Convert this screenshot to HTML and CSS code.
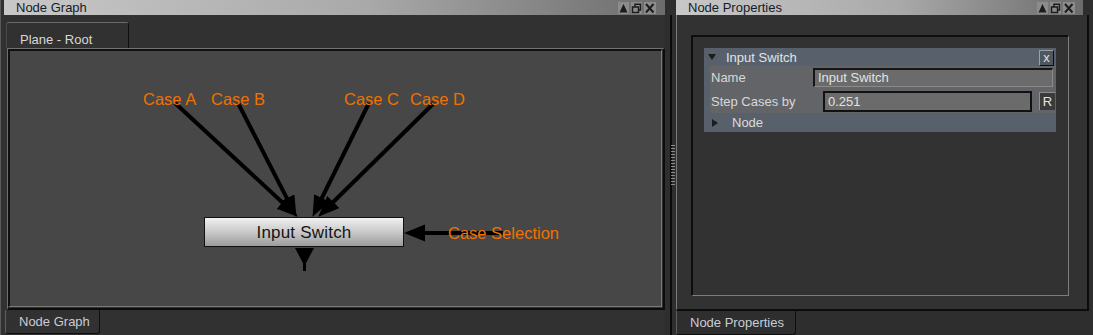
FILE: index.html
```html
<!DOCTYPE html>
<html lang="en">
<head>
    <meta charset="UTF-8">
    <title>Node Graph</title>
    <link rel="stylesheet" href="styles.css">
</head>
<body>
    <div class="app">

        <!-- Node graph pane -->
        <section class="pane pane-graph">
            <header class="titlebar">
                <span class="title">Node Graph</span>
                <svg class="tb-buttons" width="38" height="12" viewBox="0 0 38 12">
                    <rect x="0" y="0" width="11" height="12" fill="#8c8c8c"/>
                    <rect x="13" y="0" width="11" height="12" fill="#8c8c8c"/>
                    <rect x="26" y="0" width="12" height="12" fill="#8c8c8c"/>
                    <polygon points="1.5,10.5 5.5,2 9.5,10.5" fill="#1c1c1c"/>
                    <rect x="14.5" y="5" width="6" height="5.5" fill="none" stroke="#1c1c1c" stroke-width="1.5"/>
                    <path d="M17 5 V2.2 H22.5 V8 H20.5" fill="none" stroke="#1c1c1c" stroke-width="1.5"/>
                    <path d="M28 2 L35.5 10.5 M35.5 2 L28 10.5" stroke="#1c1c1c" stroke-width="2"/>
                </svg>
            </header>

            <div class="tabs-top">
                <div class="tab">Plane - Root</div>
            </div>

            <div class="graph-frame">
                <div class="canvas">
                    <svg class="wires" width="651" height="255" viewBox="10 51 651 255">
                        <defs>
                            <marker id="head" markerUnits="userSpaceOnUse" markerWidth="22" markerHeight="18"
                                    refX="10" refY="8.5" orient="auto">
                                <path d="M0,0 L21,8.5 L0,17 z" fill="#000"/>
                            </marker>
                        </defs>
                        <g stroke="#000" stroke-width="4" marker-end="url(#head)">
                            <line x1="175" y1="103" x2="289.7" y2="209.2"/>
                            <line x1="238" y1="103" x2="291.4" y2="207.1"/>
                            <line x1="369" y1="103" x2="317.4" y2="207.0"/>
                            <line x1="434" y1="103" x2="326.1" y2="209.0"/>
                            <line x1="503" y1="233" x2="415" y2="233"/>
                        </g>
                        <polygon points="295,248 314,248 304.5,266" fill="#000"/>
                        <line x1="304.5" y1="248" x2="304.5" y2="271" stroke="#000" stroke-width="3"/>
                    </svg>

                    <span class="case" style="left: 133px; top: 40px;">Case A</span>
                    <span class="case" style="left: 201px; top: 40px;">Case B</span>
                    <span class="case" style="left: 334px; top: 40px;">Case C</span>
                    <span class="case" style="left: 400px; top: 40px;">Case D</span>
                    <span class="case" style="left: 438px; top: 174px;">Case Selection</span>

                    <div class="node" style="left: 194px; top: 166px;">Input Switch</div>
                </div>
            </div>

            <div class="tabs-bottom">
                <div class="btab">Node Graph</div>
            </div>
        </section>

        <!-- Splitter -->
        <div class="splitter">
            <div class="grip"></div>
        </div>

        <!-- Node properties pane -->
        <section class="pane pane-props">
            <header class="titlebar">
                <span class="title">Node Properties</span>
                <svg class="tb-buttons" width="38" height="12" viewBox="0 0 38 12">
                    <rect x="0" y="0" width="11" height="12" fill="#8c8c8c"/>
                    <rect x="13" y="0" width="11" height="12" fill="#8c8c8c"/>
                    <rect x="26" y="0" width="12" height="12" fill="#8c8c8c"/>
                    <polygon points="1.5,10.5 5.5,2 9.5,10.5" fill="#1c1c1c"/>
                    <rect x="14.5" y="5" width="6" height="5.5" fill="none" stroke="#1c1c1c" stroke-width="1.5"/>
                    <path d="M17 5 V2.2 H22.5 V8 H20.5" fill="none" stroke="#1c1c1c" stroke-width="1.5"/>
                    <path d="M28 2 L35.5 10.5 M35.5 2 L28 10.5" stroke="#1c1c1c" stroke-width="2"/>
                </svg>
            </header>

            <div class="props-body">
                <div class="props-box">
                    <div class="group">
                        <div class="group-head">
                            <span class="arrow-down"></span>
                            <span class="group-title">Input Switch</span>
                            <span class="close-btn">x</span>
                        </div>
                        <div class="rows">
                            <div class="row row-name">
                                <span class="label">Name</span>
                                <span class="field field-name">Input Switch</span>
                            </div>
                            <div class="row row-step">
                                <span class="label">Step Cases by</span>
                                <span class="field field-step">0.251</span>
                                <span class="reset-btn">R</span>
                            </div>
                        </div>
                        <div class="group-sub">
                            <span class="arrow-right"></span>
                            <span>Node</span>
                        </div>
                    </div>
                </div>
            </div>

            <div class="tabs-bottom">
                <div class="btab">Node Properties</div>
            </div>
        </section>
    </div>
</body>
</html>
```

FILE: styles.css
```css
* { box-sizing: border-box; }

body {
    margin: 0;
    background-color: #2e2e2e;
    font-family: "Liberation Sans", Arial, sans-serif;
    font-size: 13px;
    color: #d4d4d4;
    overflow: hidden;
}

.app {
    display: flex;
    width: 1093px;
    height: 335px;
}

.pane {
    display: flex;
    flex-direction: column;
    background-color: #313131;
}

/* Title bars */
.titlebar {
    height: 15px;
    display: flex;
    align-items: center;
    justify-content: space-between;
    padding: 0 9px 0 12px;
    background: linear-gradient(to right, #c8c8c8, #a9a9a9 55%, #6c6c6c);
    color: #151b28;
    line-height: 15px;
}

.tb-buttons {
    display: block;
    margin-top: 1px;
}

/* Left pane */
.pane-graph {
    width: 665px;
    border-left: 1px solid #5a5a5a;
}

.pane-graph .titlebar {
    margin-left: 3px;
}

.tabs-top {
    height: 33px;
    padding: 7px 0 0 5px;
}

.tab {
    width: 123px;
    height: 26px;
    border-top: 1px solid #6a6a6a;
    border-left: 1px solid #4a4a4a;
    border-right: 1px solid #0e0e0e;
    border-radius: 3px 3px 0 0;
    padding: 10px 0 0 13px;
    line-height: 13px;
    color: #d8d8d8;
}

.graph-frame {
    margin-left: 6px;
    width: 658px;
    height: 262px;
    border-top: 1px solid #707070;
    border-left: 1px solid #707070;
    border-right: 2px solid #0c0c0c;
    border-bottom: 2px solid #0c0c0c;
    padding: 0 1px 1px 0;
}

.canvas {
    position: relative;
    width: 100%;
    height: 100%;
    background-color: #474747;
    border-top: 2px solid #111;
    border-left: 2px solid #111;
    border-right: 1px solid #7a7a7a;
    border-bottom: 1px solid #7a7a7a;
}

.wires {
    position: absolute;
    left: 0;
    top: 0;
}

.case {
    position: absolute;
    font-size: 16.5px;
    line-height: 1;
    color: #f07100;
    white-space: nowrap;
}

.node {
    position: absolute;
    width: 200px;
    height: 30px;
    border: 1px solid #111;
    background: linear-gradient(to bottom, #f0f0f0, #c9c9c9 50%, #9c9c9c);
    color: #141414;
    font-size: 17px;
    text-align: center;
    line-height: 29px;
    letter-spacing: 0.2px;
}

.tabs-bottom {
    flex: 1;
    padding-left: 4px;
}

.btab {
    display: inline-block;
    height: 24px;
    border-left: 1px solid #5e5e5e;
    border-right: 1px solid #0e0e0e;
    border-bottom: 1px solid #0e0e0e;
    border-radius: 0 0 3px 3px;
    padding: 5px 0 0 13px;
    line-height: 13px;
    color: #c9ccd6;
    white-space: nowrap;
}

.pane-graph .btab {
    width: 95px;
}

/* Splitter */
.splitter {
    width: 11px;
    margin-right: -5px;
    position: relative;
    z-index: 1;
    background-color: #2e2e2e;
}

.grip {
    position: absolute;
    left: 6px;
    top: 145px;
    width: 4px;
    height: 40px;
    background: repeating-linear-gradient(to bottom, #8a8a8a 0 1px, transparent 1px 3px);
}

.splitter::before {
    content: "";
    position: absolute;
    left: 5px;
    top: 15px;
    bottom: 0;
    width: 2px;
    background-color: #0a0a0a;
}

/* Right pane */
.pane-props {
    width: 413px;
    margin-left: 5px;
    background-color: transparent;
}

.pane-props .titlebar {
    width: 407px;
    padding-right: 8px;
}

.props-body {
    height: 297px;
    background-color: #323232;
    border-left: 1px solid #7a7a7a;
    border-right: 2px solid #0c0c0c;
    border-bottom: 2px solid #0c0c0c;
    padding: 20px 18px 13px 14px;
}

.props-box {
    height: 100%;
    border-top: 2px solid #0e0e0e;
    border-left: 2px solid #0e0e0e;
    border-right: 1px solid #7d7d7d;
    border-bottom: 1px solid #7d7d7d;
    padding: 11px 11px 0 11px;
}

.group {
    width: 352px;
    background-color: #58616b;
}

.group-head {
    height: 18px;
    display: flex;
    align-items: center;
    padding-left: 4px;
    color: #e2e4e8;
}

.arrow-down {
    width: 0;
    height: 0;
    border-left: 4px solid transparent;
    border-right: 4px solid transparent;
    border-top: 6px solid #1c1c1c;
    margin-right: 10px;
}

.group-title {
    flex: 1;
    line-height: 14px;
    padding-top: 1px;
}

.close-btn {
    width: 15px;
    height: 16px;
    margin-right: 2px;
    margin-top: 1px;
    background-color: #4e565f;
    border-top: 1px solid #9aa0a8;
    border-left: 1px solid #9aa0a8;
    border-right: 1px solid #0e0e0e;
    border-bottom: 1px solid #0e0e0e;
    text-align: center;
    line-height: 14px;
    color: #e0e0e0;
}

.rows {
    margin-left: 6px;
    background-color: #626467;
}

.row {
    display: flex;
    align-items: center;
    padding-left: 1px;
}

.row-name {
    height: 23px;
}

.row-step {
    height: 24px;
}

.label {
    color: #d8d8d8;
}

.row-name .label {
    width: 102px;
}

.row-step .label {
    width: 112px;
}

.field {
    background-color: #6b6b6b;
    color: #e2e2e2;
    padding-left: 3px;
}

.field-name {
    width: 240px;
    height: 19px;
    line-height: 16px;
    border-top: 2px solid #151515;
    border-left: 2px solid #151515;
    border-right: 1px solid #8a8a8a;
    border-bottom: 1px solid #8a8a8a;
}

.field-step {
    width: 209px;
    height: 21px;
    line-height: 17px;
    border: 2px solid #111;
}

.reset-btn {
    width: 16px;
    height: 18px;
    margin-left: 7px;
    background-color: #3a3a3a;
    border-top: 1px solid #8e8e8e;
    border-left: 1px solid #8e8e8e;
    text-align: center;
    line-height: 17px;
    color: #e4e4e4;
}

.group-sub {
    height: 19px;
    display: flex;
    align-items: center;
    padding-left: 8px;
    color: #dcdcdc;
}

.arrow-right {
    width: 0;
    height: 0;
    border-top: 4px solid transparent;
    border-bottom: 4px solid transparent;
    border-left: 6px solid #1c1c1c;
    margin-right: 14px;
}

.pane-props .tabs-bottom {
    padding-left: 0;
}

.pane-props .btab {
    width: 120px;
}
```
